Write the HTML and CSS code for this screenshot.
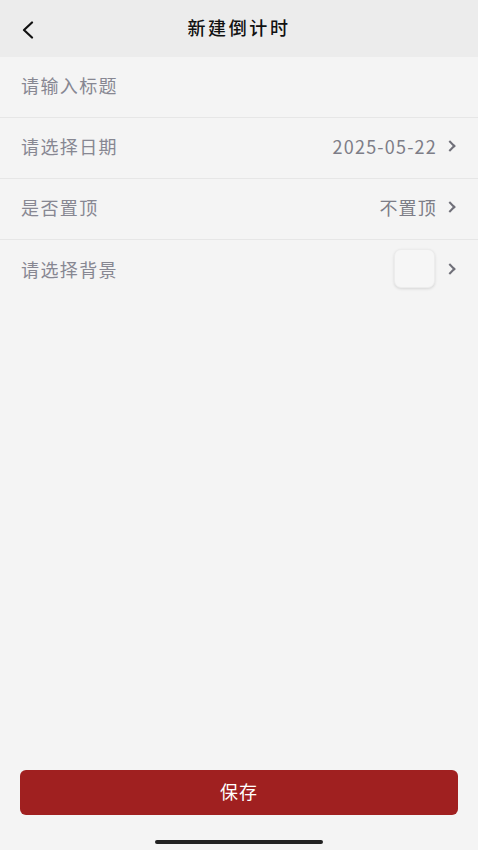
FILE: index.html
```html
<!DOCTYPE html>
<html lang="zh">
<head>
    <meta charset="UTF-8">
    <meta name="viewport" content="width=device-width, initial-scale=1.0">
    <title>新建倒计时</title>
    <link rel="stylesheet" href="styles.css">
</head>
<body>
    <div class="page">
        <header class="nav">
            <button class="back-btn" aria-label="返回">
                <svg width="16" height="18" viewBox="0 0 16 18"><path d="M12 1.5 L4 9 L12 16.5" fill="none" stroke="#111" stroke-width="2.2" stroke-linecap="round" stroke-linejoin="round"/></svg>
            </button>
            <h1>新建倒计时</h1>
        </header>

        <div class="form">
            <div class="row">
                <input class="title-input" type="text" placeholder="请输入标题">
            </div>
            <div class="row">
                <span class="label">请选择日期</span>
                <span class="value">2025-05-22<i class="chev"></i></span>
            </div>
            <div class="row">
                <span class="label">是否置顶</span>
                <span class="value">不置顶<i class="chev"></i></span>
            </div>
            <div class="row">
                <span class="label">请选择背景</span>
                <span class="value"><span class="swatch"></span><i class="chev"></i></span>
            </div>
        </div>

        <div class="footer">
            <button class="save-btn">保存</button>
            <div class="home-bar"></div>
        </div>
    </div>
</body>
</html>
```

FILE: styles.css
```css
* {
    box-sizing: border-box;
}
body {
    margin: 0;
    font-family: "Noto Sans CJK SC", "Noto Sans", sans-serif;
    background-color: #f4f4f4;
}
.page {
    height: 850px;
    display: flex;
    flex-direction: column;
}
.nav {
    height: 57px;
    background-color: #ececec;
    display: flex;
    align-items: center;
    justify-content: center;
    position: relative;
    padding-bottom: 4px;
}
.nav h1 {
    margin: 0;
    font-size: 18px;
    font-weight: 500;
    color: #111;
    letter-spacing: 2.6px;
}
.back-btn {
    position: absolute;
    left: 20px;
    top: 20px;
    background: none;
    border: none;
    padding: 0;
    width: 20px;
    height: 20px;
    display: flex;
    align-items: center;
}
.form {
    flex: 1;
}
.row {
    height: 61px;
    display: flex;
    align-items: center;
    justify-content: space-between;
    padding: 0 22px 4px 21px;
    border-bottom: 1px solid #e6e6e6;
}
.row:last-child {
    border-bottom: none;
}
.label, .title-input {
    font-size: 18px;
    color: #878792;
    letter-spacing: 1.4px;
}
.title-input {
    border: none;
    background: transparent;
    padding: 0;
    width: 100%;
    font-family: inherit;
    outline: none;
}
.title-input::placeholder {
    color: #878792;
}
.value {
    display: flex;
    align-items: center;
    font-size: 18px;
    color: #7d7d87;
    letter-spacing: 1.2px;
}
.chev {
    display: inline-block;
    width: 8px;
    height: 8px;
    border-top: 2px solid #6f6f78;
    border-right: 2px solid #6f6f78;
    transform: rotate(45deg);
    margin-left: 9px;
    margin-right: 2px;
}
.swatch {
    width: 41px;
    height: 39px;
    border-radius: 7px;
    background-color: #f6f6f6;
    border: 1px solid #ececec;
    box-shadow: 0 1px 3px rgba(0,0,0,0.12);
    margin-right: 2px;
}
.footer {
    padding: 0 20px;
}
.save-btn {
    width: 100%;
    height: 45px;
    border: none;
    border-radius: 6px;
    background-color: #a02020;
    color: #fff;
    font-size: 18px;
    font-family: inherit;
    letter-spacing: 1px;
    padding-bottom: 4px;
    margin-bottom: 25px;
}
.home-bar {
    width: 168px;
    height: 4px;
    margin: 0 auto 6px;
    background-color: #222;
    border-radius: 2px;
}
```
